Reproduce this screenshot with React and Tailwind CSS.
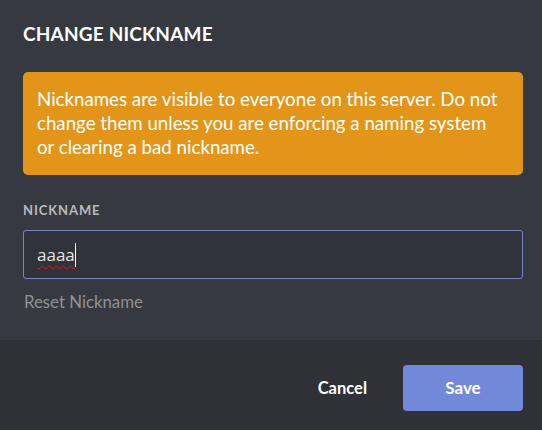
export default function App() {
  return (
    <div className="w-[542px] h-[430px] bg-[#36393f] flex flex-col" style={{ fontFamily: 'Lato, "Noto Sans", sans-serif' }}>
      <div className="flex-1 pl-[23px] pr-[19px] pt-[20px] flex flex-col">
        <h2 className="text-[19px] leading-[28px] font-bold text-white uppercase tracking-[0.01em]">Change Nickname</h2>
        <div className="mt-[24px] h-[103px] bg-[#e29519] rounded-[5px] px-[14px] py-[15px] text-white text-[18.7px] leading-[24px] whitespace-nowrap">
          Nicknames are visible to everyone on this server. Do not<br />
          change them unless you are enforcing a naming system<br />
          or clearing a bad nickname.
        </div>
        <div className="mt-[27px] text-[13px] leading-[16px] font-bold uppercase tracking-[0.07em] text-[#b9bbbe]">Nickname</div>
        <div className="mt-[12px] h-[49px] border border-[#7a84c2] rounded-[3px] bg-[#303339] flex items-center px-[13px]">
          <span className="text-[17px] text-[#e4e5e6] underline decoration-wavy decoration-[#d02020] underline-offset-[4px] decoration-[1px]" style={{ fontFamily: '"Open Sans", sans-serif' }}>aaaa</span>
          <span className="w-px h-[24px] bg-white"></span>
        </div>
        <div className="mt-[13px] text-[16.8px] leading-[20px] text-[#8e9297] pl-[1px]">Reset Nickname</div>
      </div>
      <div className="h-[90px] bg-[#2f3136] flex items-start justify-end pt-[25px] pr-[19px] gap-[36px]">
        <button className="h-[46px] text-[16.5px] font-bold text-white">Cancel</button>
        <button className="w-[120px] h-[46px] bg-[#7289da] rounded-[4px] text-[17px] font-bold text-white">Save</button>
      </div>
    </div>
  );
}
